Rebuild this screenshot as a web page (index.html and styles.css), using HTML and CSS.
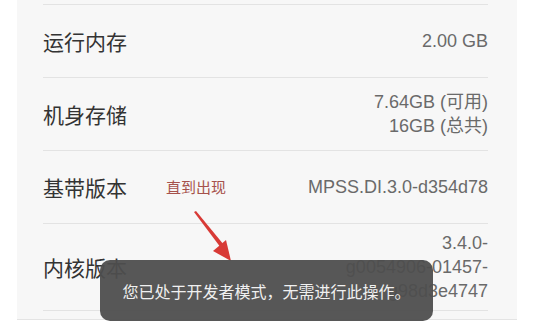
FILE: index.html
```html
<!DOCTYPE html>
<html lang="zh-CN">
<head>
<meta charset="utf-8">
<link rel="stylesheet" href="styles.css">
</head>
<body>
<div class="card">
  <div class="list">
    <div class="row">
      <div class="label">运行内存</div>
      <div class="value">2.00 GB</div>
    </div>
    <div class="row">
      <div class="label">机身存储</div>
      <div class="value">
        <div>7.64GB (可用)</div>
        <div>16GB (总共)</div>
      </div>
    </div>
    <div class="row">
      <div class="left">
        <div class="label">基带版本</div>
        <div class="note">直到出现</div>
      </div>
      <div class="value">MPSS.DI.3.0-d354d78</div>
    </div>
    <div class="row tall">
      <div class="label">内核版本</div>
      <div class="value">
        <div>3.4.0-</div>
        <div>g0054906-01457-</div>
        <div>g98d3e4747</div>
      </div>
    </div>
  </div>
</div>

<svg class="arrow" width="543" height="330" viewBox="0 0 543 330">
  <polygon points="194,212 196,211 224,245 221,248" fill="#d83a36"/>
  <polygon points="231,261 213,251 226,240" fill="#d83a36"/>
</svg>

<div class="toast">您已处于开发者模式，无需进行此操作。</div>
</body>
</html>
```

FILE: styles.css
```css
html, body {
  margin: 0;
  padding: 0;
  background: #ffffff;
}

body {
  width: 543px;
  height: 330px;
  overflow: hidden;
  position: relative;
  font-family: "Liberation Sans", "Noto Sans CJK SC", sans-serif;
}

.card {
  margin-left: 17px;
  width: 500px;
  background: #f7f7f7;
  padding-top: 4px;
  padding-bottom: 8px;
  border-bottom: 1px solid #e4e4e4;
}

.list {
  padding: 0 29px 0 26px;
}

.row {
  display: flex;
  justify-content: space-between;
  align-items: center;
  height: 72px;
  border-top: 1px solid #e3e3e3;
}

.row.tall {
  height: 86px;
  border-bottom: 1px solid #e3e3e3;
}

.left {
  display: flex;
  align-items: center;
}

.label {
  font-family: "Noto Sans CJK SC", sans-serif;
  font-size: 21px;
  color: #333333;
  line-height: 28px;
}

.note {
  font-family: "Noto Sans CJK SC", sans-serif;
  font-size: 15px;
  color: #a6524c;
  margin-left: 39px;
  line-height: 20px;
}

.value {
  font-size: 18px;
  line-height: 24px;
  color: #6a6a6a;
  text-align: right;
}

.arrow {
  position: absolute;
  left: 0;
  top: 0;
}

.toast {
  position: absolute;
  left: 100px;
  top: 260px;
  width: 333px;
  height: 61px;
  border-radius: 10px;
  background: rgba(78, 78, 78, 0.95);
  color: #f0f0f0;
  font-family: "Noto Sans CJK SC", sans-serif;
  font-size: 16px;
  display: flex;
  align-items: center;
  justify-content: center;
}
```
